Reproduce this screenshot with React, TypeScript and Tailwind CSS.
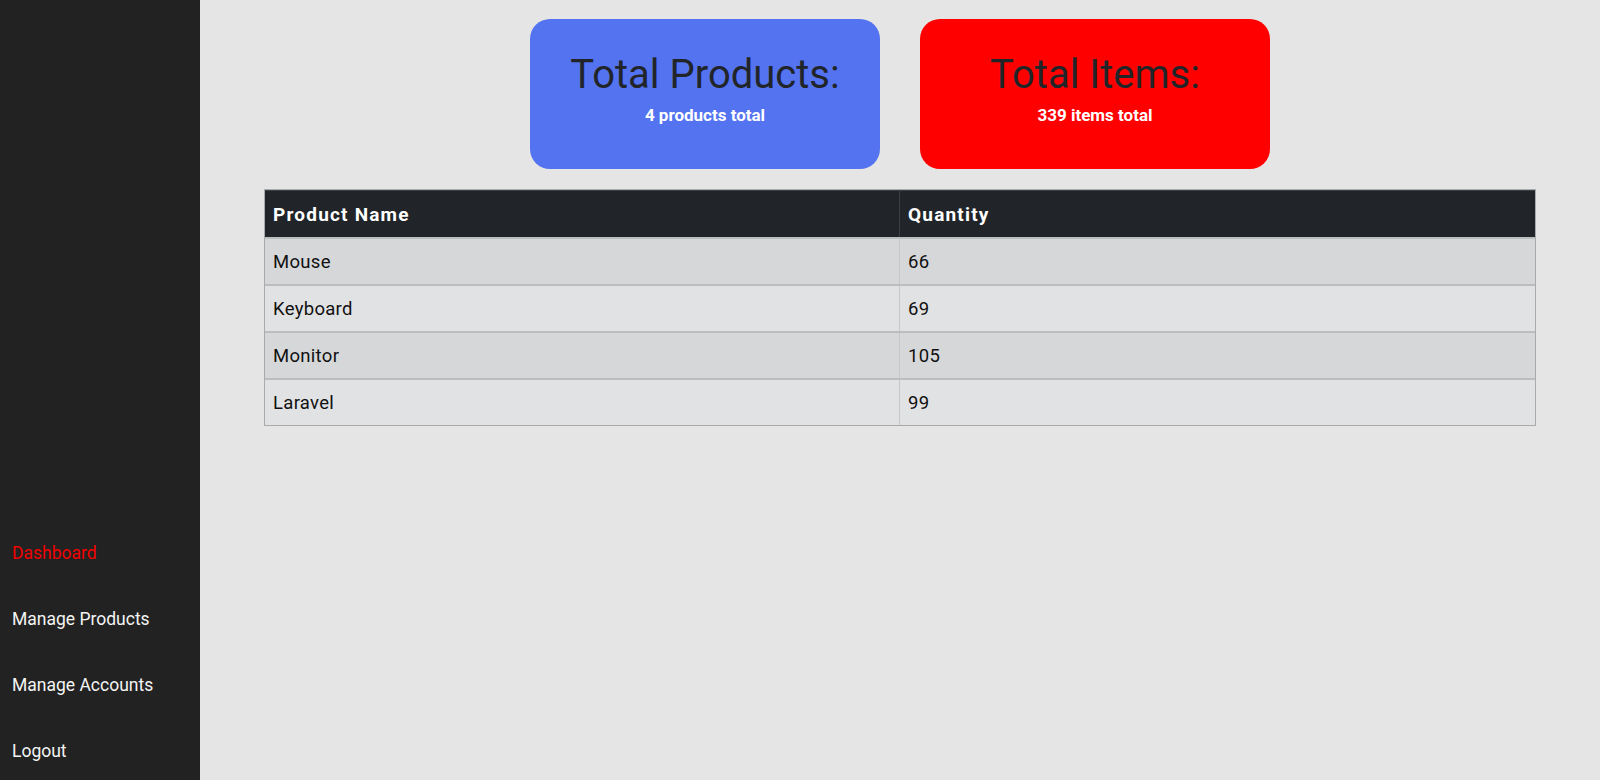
import React from "react";

const rows = [
  { name: "Mouse", qty: 66 },
  { name: "Keyboard", qty: 69 },
  { name: "Monitor", qty: 105 },
  { name: "Laravel", qty: 99 },
];

export default function App() {
  return (
    <div className="flex h-[780px] w-full font-['Roboto',sans-serif]">
      <aside className="flex w-[200px] shrink-0 flex-col justify-end gap-[42px] bg-[#222222] pb-[17px] pl-3 text-[17.5px] leading-6">
        <a className="text-[#f00000]">Dashboard</a>
        <a className="text-[#f4f4f4]">Manage Products</a>
        <a className="text-[#f4f4f4]">Manage Accounts</a>
        <a className="text-[#f4f4f4]">Logout</a>
      </aside>
      <main className="flex-1 bg-[#e5e5e5] px-16 pt-[19px]">
        <div className="flex justify-center gap-10">
          <div className="h-[150px] w-[350px] rounded-[20px] bg-[#5473f1] pt-[32px] text-center">
            <div className="text-[40px] leading-[48px] text-[#212529]">Total Products:</div>
            <div className="mt-[4px] text-[17px] font-bold leading-6 text-white">4 products total</div>
          </div>
          <div className="h-[150px] w-[350px] rounded-[20px] bg-[#ff0000] pt-[32px] text-center">
            <div className="text-[40px] leading-[48px] text-[#212529]">Total Items:</div>
            <div className="mt-[4px] text-[17px] font-bold leading-6 text-white">339 items total</div>
          </div>
        </div>
        <div className="mt-[20px] border border-[#a9aaac]">
          <div className="grid grid-cols-2 border-t border-[#3a3f44] bg-[#212529] text-[19px] font-bold leading-7 tracking-[1.2px] text-white">
            <div className="border-r border-[#3a3f44] pb-2 pl-2 pt-[10px]">Product Name</div>
            <div className="pb-2 pl-2 pt-[10px]">Quantity</div>
          </div>
          {rows.map((r, i) => (
            <div
              key={r.name}
              className={`grid grid-cols-2 border-t-2 border-[#bcbdbf] text-[18.5px] leading-[27px] tracking-[0.3px] text-[#111] ${
                i % 2 === 0 ? "bg-[#d6d7d9]" : "bg-[#e1e2e4]"
              }`}
            >
              <div className="border-r border-[#c6c7c9] pb-2 pl-2 pt-[10px]">{r.name}</div>
              <div className="pb-2 pl-2 pt-[10px]">{r.qty}</div>
            </div>
          ))}
        </div>
      </main>
    </div>
  );
}
